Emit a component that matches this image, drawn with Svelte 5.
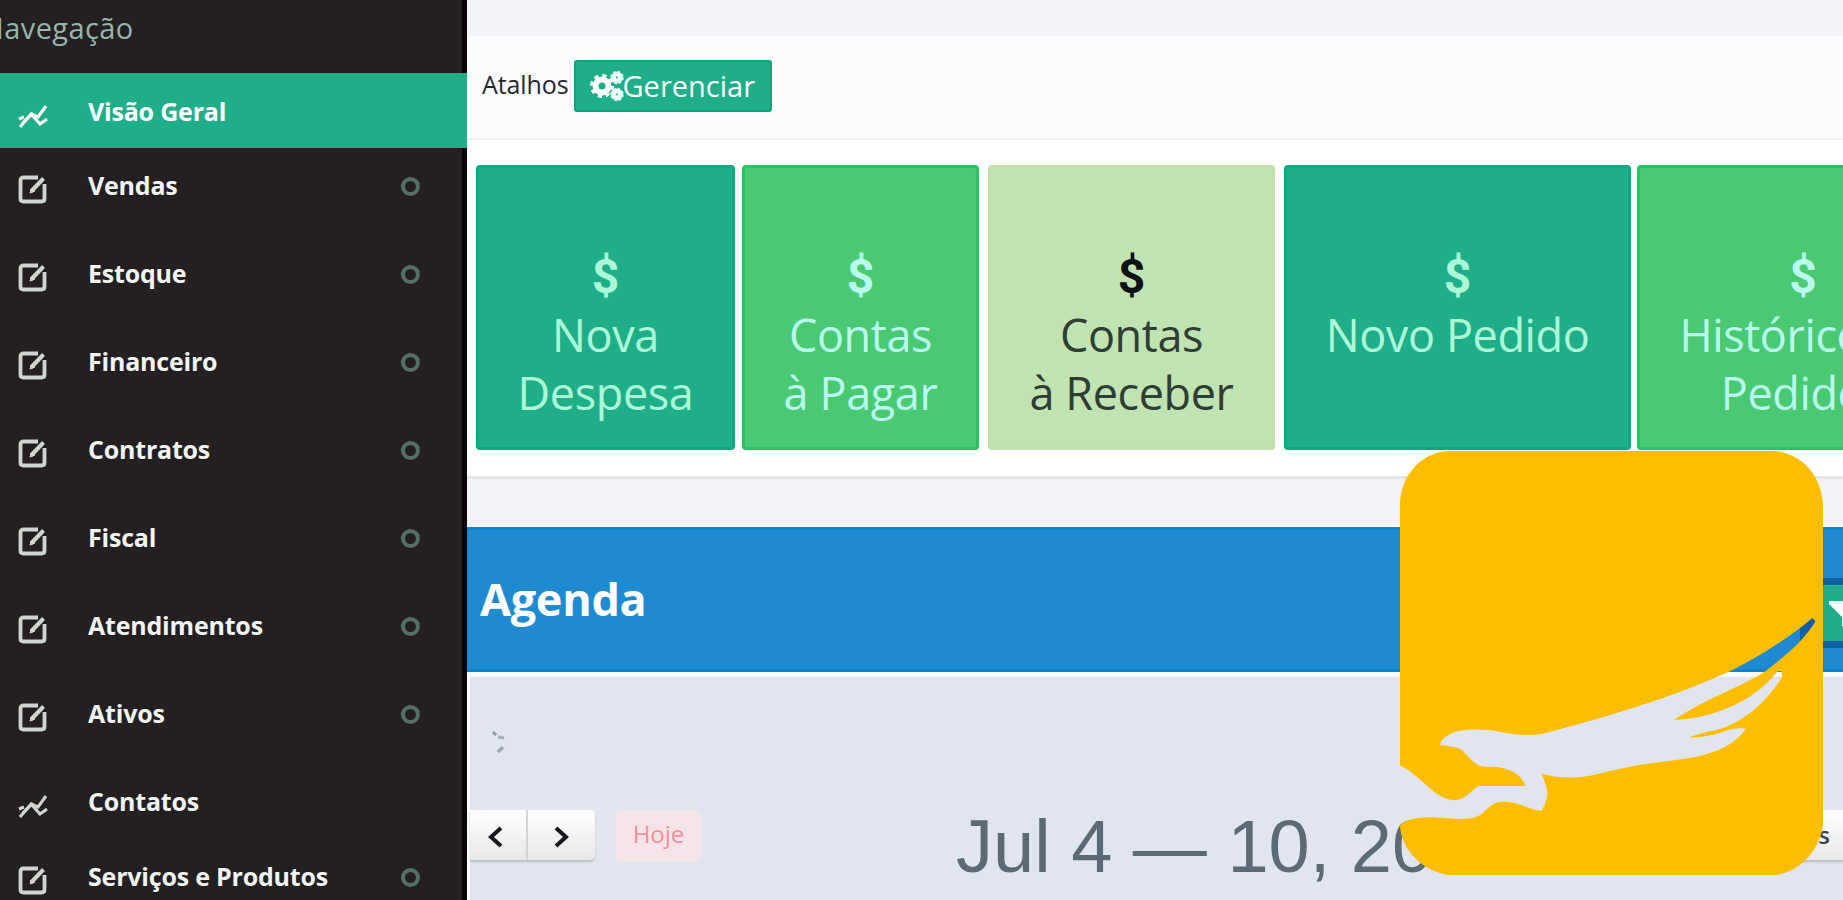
<script lang="ts">
	type NavItem = { label: string; icon: 'chart' | 'edit'; active?: boolean };

	const navItems: NavItem[] = [
		{ label: 'Visão Geral', icon: 'chart', active: true },
		{ label: 'Vendas', icon: 'edit' },
		{ label: 'Estoque', icon: 'edit' },
		{ label: 'Financeiro', icon: 'edit' },
		{ label: 'Contratos', icon: 'edit' },
		{ label: 'Fiscal', icon: 'edit' },
		{ label: 'Atendimentos', icon: 'edit' },
		{ label: 'Ativos', icon: 'edit' },
		{ label: 'Contatos', icon: 'chart' },
		{ label: 'Serviços e Produtos', icon: 'edit' }
	];

	const shortcuts = [
		{ lines: ['Nova', 'Despesa'], color: 'teal', width: 259 },
		{ lines: ['Contas', 'à Pagar'], color: 'green', width: 237 },
		{ lines: ['Contas', 'à Receber'], color: 'light', width: 287 },
		{ lines: ['Novo Pedido'], color: 'teal', width: 347 },
		{ lines: ['Histórico de', 'Pedidos'], color: 'green', width: 332 }
	];
</script>

<div class="app">
	<aside class="sidebar">
		<div class="nav-title">Navegação</div>
		<nav>
			{#each navItems as item}
				<a
					class="nav-item"
					class:active={item.active}
					class:has-children={item.icon === 'edit'}
					href="#top"
				>
					{#if item.icon === 'chart'}
						<svg class="nav-icon" viewBox="0 0 30 30" fill="none" stroke="currentColor">
							<path d="M2 26 L13 13 L22 23 L29 18" stroke-width="3" />
							<path d="M1 18 L6 16 M5 22 L14 13 L20 16 L28 5" stroke-width="3" />
						</svg>
					{:else}
						<svg class="nav-icon" viewBox="0 0 30 30" fill="none" stroke="currentColor">
							<path
								d="M20 2.500 H5.500 Q2.500 2.500 2.500 5.500 V23.500 Q2.500 26.500 5.500 26.500 H23.500 Q26.500 26.500 26.500 23.500 V9"
								stroke-width="3.800"
							/>
							<path d="M13 16.500 L25.500 3.500" stroke-width="4" />
							<path d="M12 18 L14 13 L17 16 Z" fill="currentColor" stroke-width="1" />
						</svg>
					{/if}
					<span class="nav-label">{item.label}</span>
					{#if item.icon === 'edit'}
						<span class="ring"></span>
					{/if}
				</a>
			{/each}
		</nav>
	</aside>

	<main>
		<section class="card">
			<header class="card-header">
				<span class="card-title">Atalhos</span>
				<button class="manage">
					<svg viewBox="0 0 34 32" width="34" height="32">
						<circle cx="12" cy="16" r="6.500" fill="none" stroke="#fff" stroke-width="6" />
						<circle cx="12" cy="16" r="10.500" fill="none" stroke="#fff" stroke-width="3" stroke-dasharray="4.200 4.050" />
						<circle cx="27" cy="7.500" r="3.500" fill="none" stroke="#e9fff8" stroke-width="5" />
						<circle cx="27" cy="24.500" r="3.500" fill="none" stroke="#e9fff8" stroke-width="5" />
						<circle cx="27" cy="7.500" r="6" fill="none" stroke="#e9fff8" stroke-width="1.500" stroke-dasharray="2.500 2.200" />
						<circle cx="27" cy="24.500" r="6" fill="none" stroke="#e9fff8" stroke-width="1.500" stroke-dasharray="2.500 2.200" />
					</svg>
					<span>Gerenciar</span>
				</button>
			</header>
			<div class="tiles">
				{#each shortcuts as tile}
					<div class="tile {tile.color}" style="width: {tile.width}px">
						<div class="dollar">$</div>
						{#each tile.lines as line}
							<div class="line">{line}</div>
						{/each}
					</div>
				{/each}
			</div>
		</section>

		<section class="agenda">
			<header class="agenda-header">
				<h2>Agenda</h2>
				<button class="filter" aria-label="Filtrar">
					<svg viewBox="0 0 36 36" width="36" height="36">
						<path d="M1 3 H35 V6 L22 19 V34 L14 28 V19 L1 6 Z" fill="#fff" />
					</svg>
				</button>
			</header>
			<div class="calendar">
				<svg class="marks" viewBox="0 0 14 26" width="14" height="26" fill="none">
					<path d="M1 2 L4 5" stroke="#8f98a8" stroke-width="3" />
					<path d="M6 7 L12 8" stroke="#a3adbb" stroke-width="3" />
					<path d="M11 17 L6 22" stroke="#9fa8b6" stroke-width="3.500" />
				</svg>
				<div class="toolbar">
					<div class="pager">
						<button aria-label="Anterior">
							<svg viewBox="0 0 18 22" width="18" height="22"><path d="M15 2 L5 11 L15 20" /></svg>
						</button>
						<button aria-label="Próximo">
							<svg viewBox="0 0 18 22" width="18" height="22"><path d="M3 2 L13 11 L3 20" /></svg>
						</button>
					</div>
					<button class="today">Hoje</button>
					<h1>Jul 4 — 10, 2022</h1>
					<button class="month">Mês</button>
				</div>
			</div>
		</section>
	</main>

	<svg class="logo" viewBox="60 60 1272 1275" preserveAspectRatio="none">
		<path
			fill="#fdbe00"
			d="M60 1005 V215 C65 130 125 65 205 60 H1185 C1265 65 1325 130 1332 215
			V1185 C1322 1260 1265 1325 1190 1335 H205 C125 1322 65 1260 60 1187
			C75 1165 120 1161 160 1161 C210 1163 265 1175 300 1155 C325 1138 335 1115 370 1115
			C415 1113 450 1140 485 1142 C497 1125 505 1100 502 1080 C498 1060 492 1045 485 1030
			C530 1045 590 1045 640 1035 C700 1020 760 1005 820 998 C880 990 950 985 1010 962
			C1055 945 1085 918 1100 895 C1055 888 1035 908 995 914 C965 921 945 922 930 921
			C960 912 985 903 1010 900 C1110 870 1170 800 1210 738 L1207 722 L1195 722
			C1130 810 1000 865 885 868 C960 815 1080 770 1150 728 C1210 685 1275 630 1310 572
			L1300 562 C1220 630 1120 690 1035 730 C890 795 720 850 490 910
			C440 918 400 912 360 904 C310 895 235 893 205 915 C185 928 180 935 182 945
			C215 948 240 950 255 968 C280 995 290 1008 320 1010 C380 1006 425 1030 437 1067
			H300 C275 1075 262 1108 222 1110 C160 1105 130 1040 60 1005 Z"
		/>
	</svg>
</div>

<style>
	:global(body) {
		margin: 0;
		overflow: hidden;
	}

	.app {
		position: relative;
		display: flex;
		width: 1843px;
		height: 900px;
		overflow: hidden;
		background: #f3f4f8;
		font-family: 'Open Sans', sans-serif;
	}

	button {
		border: none;
		margin: 0;
		padding: 0;
		font-family: inherit;
	}

	/* Sidebar */
	.sidebar {
		flex: none;
		box-sizing: border-box;
		width: 467px;
		height: 900px;
		background: #242021;
		border-right: 5px solid #0a0607;
	}

	.nav-title {
		height: 73px;
		margin-left: -18px;
		color: #94b5ad;
		font-size: 29px;
		line-height: 56px;
		letter-spacing: 0.4px;
	}

	.nav-item {
		display: flex;
		box-sizing: border-box;
		height: 75px;
		padding-left: 18px;
		color: #f1f5f1;
		text-decoration: none;
	}

	.nav-item.has-children {
		height: 88px;
	}

	.nav-item.active {
		margin-right: -5px;
		background: #1eaf8a;
		color: #fff;
	}

	.nav-icon {
		flex: none;
		width: 30px;
		height: 30px;
		margin-top: 27px;
		color: #d0d6cf;
	}

	.active .nav-icon {
		margin-top: 28px;
		color: #fff;
	}

	.nav-label {
		width: 313px;
		margin-left: 40px;
		font-size: 25px;
		font-weight: 700;
		line-height: 75px;
		letter-spacing: -0.2px;
		white-space: nowrap;
	}

	.active .nav-label {
		line-height: 77px;
	}

	.ring {
		box-sizing: border-box;
		width: 19px;
		height: 19px;
		margin-top: 29px;
		border: 4px solid #507069;
		border-radius: 50%;
	}

	/* Shortcuts */
	main {
		flex: 1;
		min-width: 0;
		padding-top: 36px;
	}

	.card {
		box-sizing: border-box;
		height: 443px;
		background: #fff;
		border-bottom: 3px solid #e5e7eb;
	}

	.card-header {
		display: flex;
		box-sizing: border-box;
		height: 104px;
		padding: 24px 0 0 15px;
		border-bottom: 2px solid #eef0f1;
		background: #fafbfd;
		color: #26282e;
		font-size: 25px;
		line-height: 48px;
	}

	.card-title {
		letter-spacing: -0.1px;
	}

	.manage {
		display: flex;
		align-items: center;
		box-sizing: border-box;
		width: 198px;
		height: 52px;
		margin-left: 5px;
		padding-left: 16px;
		border: 2px solid #0ba579;
		border-radius: 3px;
		background: #1eaf8a;
		color: #fff;
		font-size: 29px;
		line-height: 48px;
	}

	.manage svg {
		flex: none;
		margin-left: -2px;
		margin-right: -1px;
	}

	.tiles {
		display: flex;
		padding: 25px 0 0 9px;
	}

	.tile {
		flex: none;
		box-sizing: border-box;
		height: 285px;
		margin-right: 7px;
		padding-top: 80px;
		border: 3px solid;
		border-radius: 4px;
		font-size: 45px;
		line-height: 58px;
		text-align: center;
		white-space: nowrap;
	}

	.tile:nth-child(2),
	.tile:nth-child(3) {
		margin-right: 9px;
	}

	.tile:nth-child(4) {
		margin-right: 6px;
	}

	.teal {
		border-color: #0ea87e;
		background: #1eaf8a;
		color: #adf9d7;
	}

	.green {
		border-color: #2bc263;
		background: #4ac973;
		color: #b9fbee;
	}

	.light {
		border-color: #bde0ad;
		background: #c1e3b2;
		color: #303c35;
	}

	.line {
		letter-spacing: -0.4px;
	}

	.dollar {
		height: 58px;
		font-family: Roboto, sans-serif;
		font-size: 48px;
		font-weight: 700;
	}

	.light .dollar {
		color: #0c1017;
	}

	/* Agenda */
	.agenda {
		margin-top: 46px;
		border-top: 2px solid #fff;
	}

	.agenda-header {
		display: flex;
		justify-content: space-between;
		box-sizing: border-box;
		height: 145px;
		padding-left: 13px;
		border-top: 3px solid #0984cf;
		border-bottom: 3px solid #0984cf;
		background: #1d8ad1;
	}

	h2 {
		margin: 0;
		color: #fff;
		font-size: 45px;
		font-weight: 700;
		line-height: 138px;
		letter-spacing: -0.3px;
	}

	.filter {
		display: flex;
		flex: none;
		box-sizing: border-box;
		width: 120px;
		height: 70px;
		margin: 48px -77px 0 0;
		padding: 13px 0 0 13px;
		border: solid #1160a6;
		border-width: 7px 7px 7px 15px;
		background: #1eaf8a;
	}

	.calendar {
		height: 228px;
		border-top: 5px solid #f8fbff;
		border-left: 3px solid #fff;
		background: #e0e5ef;
	}

	.marks {
		display: block;
		margin: 53px 0 0 22px;
	}

	.toolbar {
		display: flex;
		align-items: flex-start;
		margin-top: 54px;
	}

	.pager {
		display: flex;
		width: 125px;
		height: 50px;
		border-radius: 0 5px 5px 0;
		box-shadow: 0 2px 2px #b9bbc0;
	}

	.pager button,
	.month {
		background: linear-gradient(#fff, #e8e8e8);
	}

	.pager button {
		display: flex;
		align-items: center;
		width: 58px;
		padding: 4px 0 0 16px;
		border-right: 2px solid #d3d4d6;
	}

	.pager button:last-child {
		width: 67px;
		padding-left: 25px;
		border-right: none;
		border-radius: 0 5px 5px 0;
	}

	.pager path {
		fill: none;
		stroke: #17191d;
		stroke-width: 4;
	}

	.today {
		width: 85px;
		height: 52px;
		margin-left: 21px;
		padding-bottom: 4px;
		border-radius: 6px;
		background: #f4e4e8;
		color: #f58f98;
		font-size: 24px;
		line-height: 46px;
	}

	h1 {
		margin: 0 0 0 255px;
		color: #5b6b76;
		font-family: 'Liberation Sans', Arial, sans-serif;
		font-size: 74px;
		font-weight: 400;
		line-height: 73px;
		white-space: nowrap;
	}

	.month {
		box-sizing: border-box;
		flex: none;
		width: 100px;
		height: 50px;
		margin: 0 -37px 0 auto;
		padding-right: 50px;
		box-shadow: 0 2px 2px #b9bbc0;
		color: #39404c;
		font-size: 24px;
		font-weight: 600;
		line-height: 44px;
		text-align: right;
	}

	.logo {
		position: absolute;
		left: 1400px;
		top: 451px;
		width: 423px;
		height: 424px;
	}
</style>
